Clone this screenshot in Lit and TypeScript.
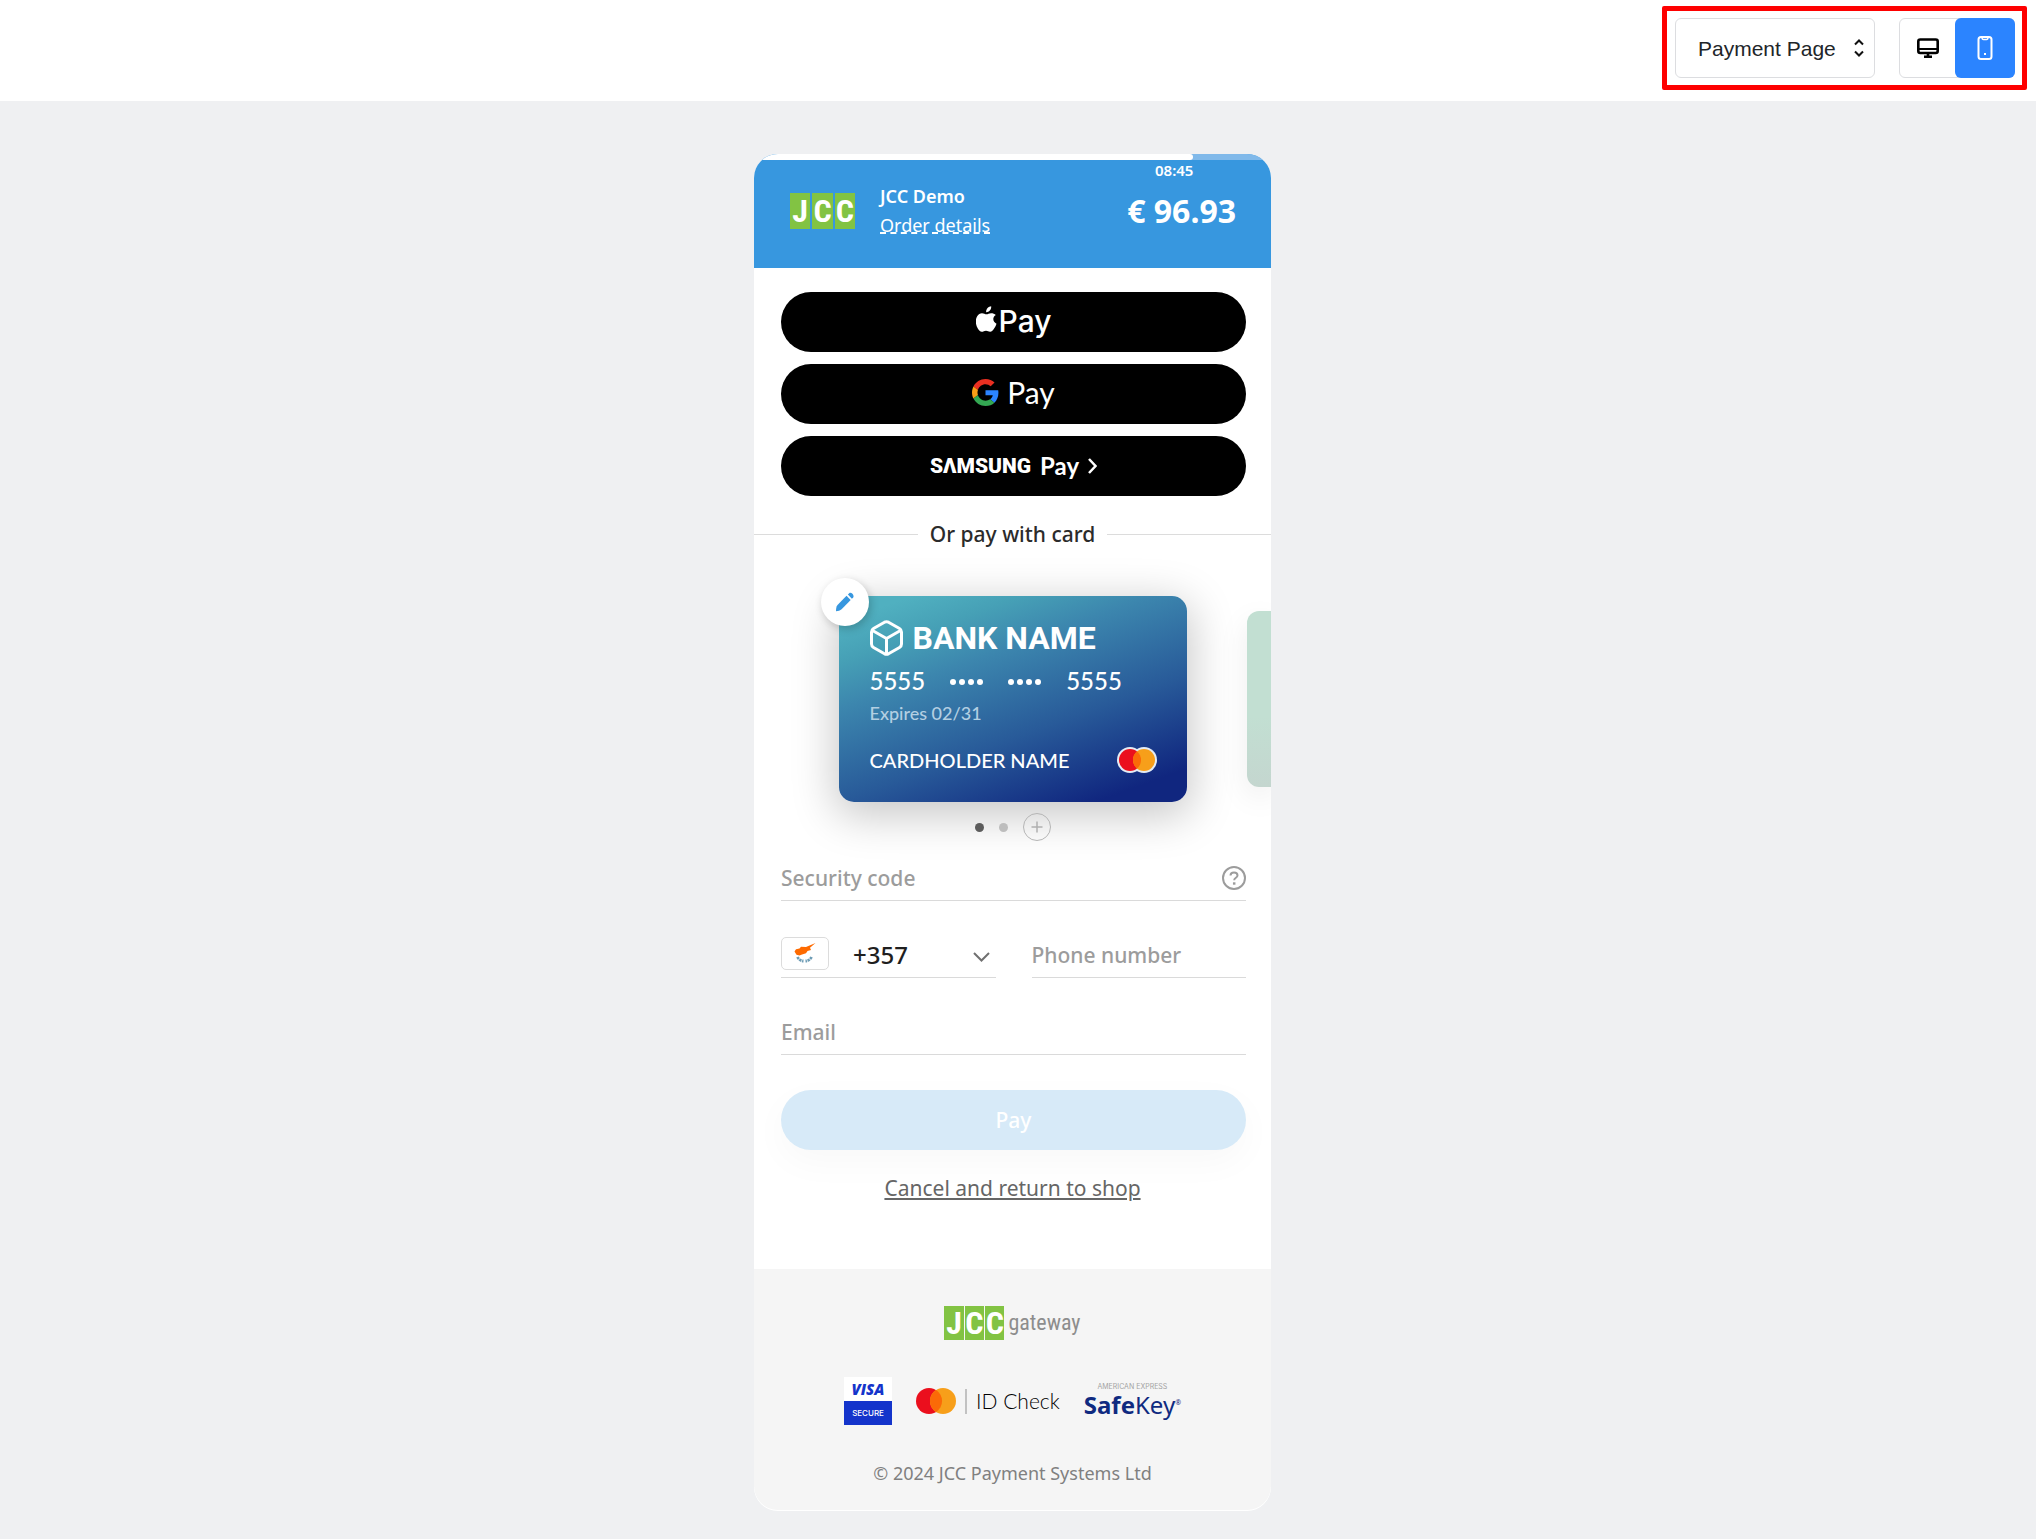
import { LitElement, html, css, svg } from "lit";
import { customElement, property, state } from "lit/decorators.js";
import { classMap } from "lit/directives/class-map.js";
import { styleMap } from "lit/directives/style-map.js";

const mastercard = (outlined: boolean) => html`
  <svg width="40" height="26" viewBox="0 0 40 26" role="img" aria-label="Mastercard">
    ${outlined
      ? svg`<circle cx="13" cy="13" r="13" fill="#e4ecf5" /><circle cx="27" cy="13" r="13" fill="#e4ecf5" />`
      : svg``}
    <circle cx="13" cy="13" r=${outlined ? 11 : 13} fill="#eb0f1d" />
    <circle cx="27" cy="13" r=${outlined ? 11 : 13} fill="#f79f1a" />
    ${outlined
      ? svg`<path d="M20 4.5a11 11 0 0 1 0 17a11 11 0 0 1 0-17z" fill="#fb6a07" />`
      : svg`<path d="M20 2a13 13 0 0 1 0 22a13 13 0 0 1 0-22z" fill="#fb6a07" />`}
  </svg>
`;

@customElement("jcc-logo")
export class JccLogo extends LitElement {
  static styles = css`
    :host {
      display: block;
    }
    .tiles {
      display: grid;
      grid-template-columns: repeat(3, 1fr);
      gap: 2px;
      width: 65px;
      height: 36px;
    }
    .small {
      width: 60px;
      height: 34px;
      gap: 1px;
    }
    .tile {
      display: flex;
      align-items: center;
      justify-content: center;
      min-width: 0;
      background: #82c343;
      color: #fff;
      font: 700 32px/34px "Roboto Condensed", Roboto, sans-serif;
    }
  `;

  @property({ type: Boolean }) small = false;

  render() {
    return html`
      <div class=${classMap({ tiles: true, small: this.small })}>
        ${["J", "C", "C"].map((c) => html`<span class="tile">${c}</span>`)}
      </div>
    `;
  }
}

@customElement("preview-toolbar")
export class PreviewToolbar extends LitElement {
  static styles = css`
    :host {
      display: block;
      background: #fff;
    }
    * {
      box-sizing: border-box;
    }
    .bar {
      display: flex;
      justify-content: flex-end;
      padding: 6px 9px 11px;
    }
    .group {
      display: flex;
      align-items: center;
      gap: 24px;
      padding: 7px 7px 7px 8px;
      border: 5px solid #fe0000;
      border-radius: 2px;
    }
    .picker {
      display: grid;
      align-items: center;
      width: 200px;
    }
    .picker > * {
      grid-area: 1 / 1;
    }
    .picker svg {
      justify-self: end;
      margin-right: 11px;
      pointer-events: none;
    }
    select {
      appearance: none;
      width: 100%;
      height: 60px;
      padding: 0 22px;
      border: 1px solid #dcdde0;
      border-radius: 6px;
      background: #fff;
      color: #212529;
      font: 21px "Liberation Sans", sans-serif;
    }
    .devices {
      display: flex;
      width: 116px;
      height: 60px;
      border: 1px solid #dcdde0;
      border-radius: 6px;
    }
    .device {
      display: grid;
      place-items: center;
      flex: 1;
      margin: -1px;
      padding: 0;
      border: 0;
      border-radius: 6px;
      background: transparent;
      color: #000;
    }
    .device.active {
      flex: 0 0 60px;
      background: #2b84ff;
      color: #fff;
    }
  `;

  @state() private device = "mobile";

  render() {
    const button = (id: string, label: string, icon: unknown) => html`
      <button
        type="button"
        class=${classMap({ device: true, active: this.device === id })}
        aria-label=${label}
        aria-pressed=${this.device === id}
        @click=${() => (this.device = id)}
      >
        ${icon}
      </button>
    `;
    return html`
      <div class="bar">
        <div class="group">
          <div class="picker">
            <select aria-label="Page">
              <option>Payment Page</option>
            </select>
            <svg width="10" height="18" viewBox="0 0 10 18" fill="none" stroke="#111" stroke-width="2">
              <path d="M1 5.5L5 1.500L9 5.500M1 12.500L5 16.500L9 12.500" />
            </svg>
          </div>
          <div class="devices">
            ${button(
              "desktop",
              "Desktop",
              html`<svg width="22" height="20" viewBox="0 0 22 20" fill="none" stroke="currentColor" stroke-width="2.600">
                <rect x="1.300" y="1.500" width="19.400" height="13.500" rx="2" />
                <path d="M1 11h20" stroke-width="2" />
                <path d="M11 15v4M7 18.700h8" />
              </svg>`
            )}
            ${button(
              "mobile",
              "Mobile",
              html`<svg width="16" height="24" viewBox="0 0 16 24" fill="none" stroke="currentColor" stroke-width="2">
                <rect x="1.500" y="1" width="13" height="22" rx="2.500" />
                <path d="M5 1.500c0 1.500 1 2 1.500 2h3c.5 0 1.500-.5 1.500-2" stroke-width="1.500" />
                <path d="M7 18h2" />
              </svg>`
            )}
          </div>
        </div>
      </div>
    `;
  }
}

@customElement("pay-header")
export class PayHeader extends LitElement {
  static styles = css`
    :host {
      display: block;
      background: #3797df;
      color: #fff;
    }
    .track {
      height: 6px;
      background: #80b9ea;
    }
    .fill {
      height: 100%;
      border-radius: 0 3px 3px 0;
      background: #fff;
    }
    .timer {
      font-size: 15px;
      font-weight: 600;
      line-height: 20px;
      text-align: right;
    }
    .row {
      display: flex;
      align-items: center;
      gap: 25px;
      padding: 4px 35px 31px 36px;
    }
    .info {
      flex: 1;
      display: flex;
      flex-direction: column;
      align-items: flex-start;
      gap: 5px;
      font-size: 18px;
      line-height: 24px;
    }
    .name {
      font-weight: 600;
    }
    a {
      color: inherit;
      text-decoration: underline dashed;
    }
    .amount {
      font-size: 32px;
      font-weight: 700;
      line-height: 40px;
    }
  `;

  @property({ type: Number }) progress = 85;

  render() {
    const width = styleMap({ width: `${this.progress}%` });
    return html`
      <div class="track"><div class="fill" style=${width}></div></div>
      <div class="timer" style=${width}>08:45</div>
      <div class="row">
        <jcc-logo></jcc-logo>
        <div class="info">
          <span class="name">JCC Demo</span>
          <a href="#order">Order details</a>
        </div>
        <span class="amount">€ 96.93</span>
      </div>
    `;
  }
}

@customElement("wallet-buttons")
export class WalletButtons extends LitElement {
  static styles = css`
    :host {
      display: flex;
      flex-direction: column;
      gap: 12px;
    }
    .wallet {
      display: flex;
      align-items: center;
      justify-content: center;
      height: 60px;
      padding: 0;
      border: 0;
      border-radius: 30px;
      background: #000;
      color: #fff;
    }
    .apple {
      gap: 2px;
      padding-bottom: 2px;
      font: 500 30px/58px Inter, sans-serif;
    }
    .apple svg {
      margin-bottom: 4px;
    }
    .google {
      gap: 8px;
      padding-bottom: 4px;
      font: 400 30px/56px Lato, sans-serif;
    }
    .samsung {
      gap: 9px;
      font: 700 24px/60px Lato, sans-serif;
    }
    .brand {
      font: 900 21px/60px Roboto, sans-serif;
    }
  `;

  render() {
    return html`
      <button type="button" class="wallet apple">
        <svg width="21" height="26" viewBox="0 0 21 26" fill="currentColor" aria-hidden="true">
          <path
            d="M15.200 0.300c.2 1.700-.5 3.200-1.400 4.300c-1 1.100-2.400 1.800-3.700 1.700c-.2-1.600.6-3.200 1.500-4.200C12.600 1 14 .3 15.200.3z"
          />
          <path
            d="M19.800 8.900c-1.600 1-2.500 2.400-2.500 4.200c0 2.100 1.200 3.800 3.200 4.600c-.5 1.600-1.300 3.200-2.400 4.800c-1.100 1.600-2.200 3.200-4 3.200c-1.700 0-2.200-1-4.100-1c-2 0-2.600 1-4.100 1.100c-1.700.1-3-1.700-4.100-3.300C-.4 19.100-1 13.600 1.200 10.200c1.100-1.800 2.900-3 4.800-3c1.900 0 3 1.100 4.500 1.100c1.500 0 2.400-1.100 4.600-1.100c1.800 0 3.500.7 4.700 1.700z"
          />
        </svg>
        <span>Pay</span>
      </button>
      <button type="button" class="wallet google">
        <svg width="27" height="27" viewBox="0 0 48 48" aria-label="Google" role="img">
          <path fill="#ea2f21" d="M24 9.500c3.540 0 6.710 1.220 9.210 3.600l6.850-6.850C35.900 2.380 30.470 0 24 0 14.620 0 6.510 5.380 2.560 13.220l7.980 6.190C12.430 13.720 17.740 9.500 24 9.500z" />
          <path fill="#2b84ff" d="M46.980 24.550c0-1.570-.15-3.090-.38-4.550H24v9.020h12.940c-.58 2.960-2.260 5.480-4.780 7.180l7.730 6c4.510-4.180 7.090-10.360 7.090-17.650z" />
          <path fill="#fa9f17" d="M10.530 28.590c-.48-1.450-.76-2.990-.76-4.590s.27-3.140.76-4.590l-7.980-6.190C.92 16.460 0 20.120 0 24c0 3.880.92 7.540 2.560 10.780l7.970-6.190z" />
          <path fill="#34a853" d="M24 48c6.480 0 11.930-2.130 15.890-5.810l-7.730-6c-2.150 1.450-4.920 2.300-8.160 2.300-6.260 0-11.570-4.220-13.470-9.910l-7.980 6.190C6.510 42.620 14.620 48 24 48z" />
        </svg>
        <span>Pay</span>
      </button>
      <button type="button" class="wallet samsung">
        <span class="brand">SΛMSUNG</span>
        <span>Pay</span>
        <svg width="9" height="16" viewBox="0 0 9 16" fill="none" stroke="currentColor" stroke-width="2.500" aria-hidden="true">
          <path d="M1 1l6.500 7L1 15" />
        </svg>
      </button>
    `;
  }
}

@customElement("card-carousel")
export class CardCarousel extends LitElement {
  static styles = css`
    :host {
      display: block;
    }
    * {
      box-sizing: border-box;
    }
    .strip {
      display: grid;
      grid-template-columns: 1fr 348px 1fr;
      align-items: center;
      padding-top: 48px;
    }
    .card {
      grid-column: 2;
      position: relative;
      height: 206px;
      padding: 24px 30px 0 31px;
      border-radius: 15px;
      background: linear-gradient(160deg, #50b0c0 8%, #46a0b6 20%, #3c86ae 34%, #285a99 62%, #10267f 90%);
      box-shadow: 0 10px 44px 4px rgba(0, 0, 0, 0.22);
      color: #fff;
      font-family: Lato, sans-serif;
      font-weight: 500;
    }
    .edit {
      position: absolute;
      top: -18px;
      left: -18px;
      display: grid;
      place-items: center;
      width: 48px;
      height: 48px;
      padding: 0;
      border: 0;
      border-radius: 50%;
      background: #fff;
      box-shadow: 2px 3px 8px rgba(0, 0, 0, 0.2);
    }
    .bank {
      display: flex;
      align-items: center;
      gap: 10px;
      font: 700 32px/36px Roboto, sans-serif;
    }
    .number {
      display: flex;
      align-items: center;
      gap: 25px;
      margin-top: 7px;
      font-size: 24px;
      line-height: 36px;
    }
    .mask {
      display: flex;
      gap: 3px;
      padding-top: 2px;
    }
    .mask i {
      width: 6px;
      height: 6px;
      border-radius: 50%;
      background: #fff;
    }
    .expires {
      color: #b3cfe2;
      font-size: 18px;
      line-height: 28px;
    }
    .owner {
      display: flex;
      align-items: center;
      justify-content: space-between;
      margin-top: 20px;
      font-size: 20px;
      line-height: 26px;
    }
    .next {
      grid-column: 3;
      justify-self: end;
      width: 24px;
      height: 176px;
      border-radius: 12px 0 0 12px;
      background: linear-gradient(#c2dfd2 60%, #c4d6cf);
      box-shadow: 0 10px 30px rgba(0, 0, 0, 0.08);
    }
    .dots {
      display: flex;
      align-items: center;
      justify-content: center;
      gap: 15px;
      position: relative;
      margin-top: 11px;
    }
    .dot {
      width: 9px;
      height: 9px;
      padding: 0;
      border: 0;
      border-radius: 50%;
      background: #bdbdbd;
    }
    .dot.on {
      background: #5c5c5c;
    }
    .add {
      display: grid;
      place-items: center;
      width: 28px;
      height: 28px;
      padding: 0;
      border: 1px solid #b5b5b5;
      border-radius: 50%;
      background: transparent;
    }
  `;

  @state() private current = 0;

  render() {
    const mask = html`<span class="mask" aria-label="hidden digits"><i></i><i></i><i></i><i></i></span>`;
    return html`
      <div class="strip">
        <div class="card">
          <button type="button" class="edit" aria-label="Edit card">
            <svg width="20" height="20" viewBox="0 0 20 20" fill="#3797df">
              <path d="M11.500 3.800L15.700 8L6.600 17.200C5.300 18.500 3 19 1 19.300C1 17 1.300 14.500 2.500 13z" />
              <path d="M12.900 2.500l1.300-1.300c1.600-1.600 5.600 1.900 4 4.200l-1.300 1.300z" />
            </svg>
          </button>
          <div class="bank">
            <svg width="33" height="36" viewBox="0 0 33 36" fill="none" stroke="#fff" stroke-width="3" stroke-linejoin="round">
              <path d="M14.500 2.200Q16.500 1.200 18.500 2.200L29.500 8.500Q31.500 9.700 31.500 12V24Q31.500 26.300 29.500 27.500L18.500 33.800Q16.500 34.800 14.500 33.800L3.500 27.500Q1.500 26.300 1.500 24V12Q1.500 9.700 3.500 8.500z" />
              <path d="M2.500 10.500L16.500 18.500L30.500 10.500M16.500 18.500V34" />
            </svg>
            <span>BANK NAME</span>
          </div>
          <div class="number"><span>5555</span>${mask}${mask}<span>5555</span></div>
          <div class="expires">Expires 02/31</div>
          <div class="owner"><span>CARDHOLDER NAME</span>${mastercard(true)}</div>
        </div>
        <div class="next"></div>
      </div>
      <div class="dots">
        ${[0, 1].map(
          (i) => html`<button
            type="button"
            class=${classMap({ dot: true, on: this.current === i })}
            aria-label="Card ${i + 1}"
            @click=${() => (this.current = i)}
          ></button>`
        )}
        <button type="button" class="add" aria-label="Add card">
          <svg width="12" height="12" viewBox="0 0 12 12" stroke="#b0b0b0" stroke-width="1.500">
            <path d="M6 0.500v11M0.500 6h11" />
          </svg>
        </button>
      </div>
    `;
  }
}

@customElement("card-form")
export class CardForm extends LitElement {
  static styles = css`
    :host {
      display: block;
    }
    * {
      box-sizing: border-box;
    }
    form {
      display: grid;
      grid-template-columns: 1fr 1fr;
      column-gap: 36px;
      row-gap: 27px;
    }
    .field {
      display: grid;
      grid-template-columns: 1fr auto;
      align-items: center;
      height: 50px;
      border-bottom: 1px solid #dadada;
    }
    .wide {
      grid-column: 1 / -1;
    }
    .field label {
      grid-area: 1 / 1;
      padding-top: 4px;
      color: #9c9c9c;
      font-size: 21px;
      font-weight: 500;
      line-height: 28px;
      pointer-events: none;
    }
    input {
      grid-area: 1 / 1;
      width: 100%;
      height: 100%;
      padding: 4px 0 0;
      border: 0;
      outline: 0;
      background: transparent;
      color: #1f1f1f;
      font: 500 21px "Noto Sans", sans-serif;
    }
    input:not(:placeholder-shown) + label {
      visibility: hidden;
    }
    .help {
      display: grid;
      padding: 4px 0 0;
      border: 0;
      background: transparent;
    }
    .country {
      grid-template-columns: 48px 1fr;
      column-gap: 24px;
    }
    .flag {
      display: grid;
      place-items: center;
      height: 33px;
      margin-top: 1px;
      border: 1px solid #dcdcdc;
      border-radius: 5px;
    }
    .code {
      display: grid;
      align-items: center;
    }
    .code > * {
      grid-area: 1 / 1;
    }
    .code svg {
      justify-self: end;
      margin: 8px 6px 0 0;
      pointer-events: none;
    }
    select {
      appearance: none;
      width: 100%;
      padding: 4px 0 0;
      border: 0;
      background: transparent;
      color: #1f1f1f;
      font: 500 24px/30px "Noto Sans", sans-serif;
    }
    .submit {
      grid-column: 1 / -1;
      height: 60px;
      margin-top: 8px;
      border: 0;
      border-radius: 30px;
      background: #d7eaf8;
      box-shadow: 0 12px 36px rgba(0, 0, 0, 0.03);
      color: #fff;
      font: 500 21px "Noto Sans", sans-serif;
    }
  `;

  render() {
    return html`
      <form @submit=${(e: Event) => e.preventDefault()}>
        <div class="field wide">
          <input id="cvc" placeholder=" " inputmode="numeric" autocomplete="off" />
          <label for="cvc">Security code</label>
          <button type="button" class="help" aria-label="Security code help">
            <svg width="24" height="24" viewBox="0 0 24 24" fill="none" stroke="#9c9c9c" stroke-width="2">
              <circle cx="12" cy="12" r="11" />
              <path d="M8.500 9.500c0-4 7-4 7 0c0 2.300-3.300 2.200-3.300 4.700" />
              <path d="M12.200 16.300v2.400" stroke-width="2.500" />
            </svg>
          </button>
        </div>
        <div class="field country">
          <span class="flag">
            <svg width="22" height="20" viewBox="0 0 22 20">
              <path
                fill="#fe6a00"
                d="M.5 8.500L2 6.300L5.500 5.500L7 3.800L12 4L21.500 0L16 4.800L17 7L13.500 8L12 10.300L8 11.500L5.500 12.500L2.500 11.800z"
              />
              <path fill="none" stroke="#6d9cb5" stroke-width="2.800" stroke-dasharray="2.500 .6" d="M3.500 14c1 2.300 3 3.800 6 4M17.500 14c-1 2.300-3 3.800-6 4" />
            </svg>
          </span>
          <div class="code">
            <select aria-label="Country code">
              <option>+357</option>
            </select>
            <svg width="17" height="10" viewBox="0 0 17 10" fill="none" stroke="#707070" stroke-width="2">
              <path d="M1 1l7.500 7.500L16 1" />
            </svg>
          </div>
        </div>
        <div class="field">
          <input id="phone" type="tel" placeholder=" " />
          <label for="phone">Phone number</label>
        </div>
        <div class="field wide">
          <input id="email" type="email" placeholder=" " />
          <label for="email">Email</label>
        </div>
        <button type="submit" class="submit">Pay</button>
      </form>
    `;
  }
}

@customElement("pay-footer")
export class PayFooter extends LitElement {
  static styles = css`
    :host {
      display: flex;
      flex-direction: column;
      align-items: center;
      gap: 37px;
      padding: 37px 26px 26px;
      border-radius: 0 0 24px 24px;
      background: #f5f5f5;
    }
    .gateway {
      display: flex;
      align-items: center;
      gap: 4px;
      color: #8d8d8d;
      font: 22px/34px "Roboto Condensed", "Liberation Sans", sans-serif;
    }
    .badges {
      display: flex;
      align-items: center;
      gap: 24px;
      height: 48px;
    }
    .visa {
      display: grid;
      grid-template-rows: 1fr 1fr;
      width: 48px;
      height: 48px;
      text-align: center;
      background: #fff;
      color: #1434cb;
      font: italic 800 15px/24px "Open Sans", sans-serif;
    }
    .secure {
      background: #1434cb;
      color: #fff;
      font: 500 8px/24px Inter, sans-serif;
    }
    .idcheck {
      display: flex;
      align-items: center;
      gap: 9px;
      color: #000;
      font: 300 21px/26px Lato, sans-serif;
    }
    .rule {
      width: 2px;
      height: 25px;
      background: #c2c2c2;
    }
    .amex {
      display: flex;
      flex-direction: column;
      align-items: center;
      color: #0f2a80;
      font: 400 24px/28px "Noto Sans", sans-serif;
    }
    .amex small {
      color: #a3a3a3;
      font: 7px/8px Inter, sans-serif;
    }
    .amex b {
      font-weight: 700;
    }
    .amex sup {
      font-size: 7px;
      line-height: 0;
    }
    .copy {
      color: #808080;
      font-size: 18px;
      line-height: 22px;
    }
  `;

  render() {
    return html`
      <div class="gateway"><jcc-logo small></jcc-logo><span>gateway</span></div>
      <div class="badges">
        <div class="visa"><span>VISA</span><span class="secure">SECURE</span></div>
        <div class="idcheck">${mastercard(false)}<i class="rule"></i><span>ID Check</span></div>
        <div class="amex"><small>AMERICAN EXPRESS</small><span><b>Safe</b>Key<sup>®</sup></span></div>
      </div>
      <div class="copy">© 2024 JCC Payment Systems Ltd</div>
    `;
  }
}

@customElement("app-root")
export class AppRoot extends LitElement {
  static styles = css`
    :host {
      display: block;
      min-height: 100vh;
      background: #eff0f2;
      font-family: "Noto Sans", sans-serif;
    }
    .stage {
      display: flex;
      justify-content: center;
      padding: 53px 11px 28px 0;
    }
    .phone {
      flex: 0 1 517px;
      min-width: 0;
      overflow: hidden;
      padding-bottom: 1px;
      border-radius: 24px;
      background: #fff;
    }
    .inset {
      padding: 0 25px 0 27px;
    }
    .wallets {
      padding-top: 24px;
    }
    .or {
      display: flex;
      align-items: center;
      gap: 12px;
      margin-top: 24px;
      color: #2b2b2b;
      font-size: 21px;
      font-weight: 500;
      line-height: 28px;
    }
    .or::before,
    .or::after {
      content: "";
      flex: 1;
      height: 1px;
      background: #dcdcdc;
    }
    .form {
      padding-top: 10px;
    }
    .cancel {
      margin: 24px 0 67px;
      text-align: center;
      font-size: 21px;
      line-height: 28px;
    }
    .cancel a {
      color: #666;
    }
  `;

  render() {
    return html`
      <preview-toolbar></preview-toolbar>
      <main class="stage">
        <div class="phone">
          <pay-header></pay-header>
          <div class="inset wallets"><wallet-buttons></wallet-buttons></div>
          <div class="or">Or pay with card</div>
          <card-carousel></card-carousel>
          <div class="inset form"><card-form></card-form></div>
          <div class="cancel"><a href="#shop">Cancel and return to shop</a></div>
          <pay-footer></pay-footer>
        </div>
      </main>
    `;
  }
}
